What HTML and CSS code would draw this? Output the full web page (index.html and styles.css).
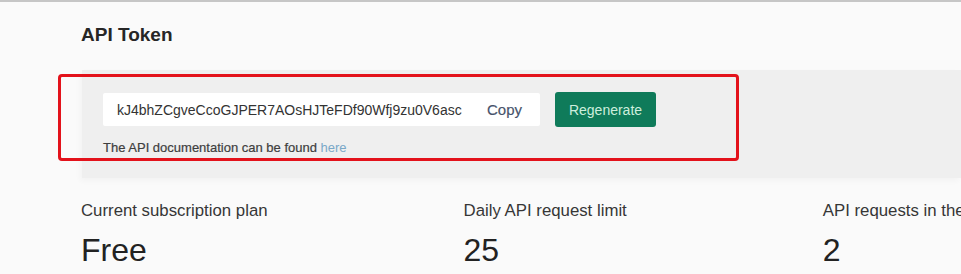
FILE: index.html
```html
<!DOCTYPE html>
<html>
<head>
<meta charset="utf-8">
<link rel="stylesheet" href="styles.css">
</head>
<body>
<div class="page">
  <h2 class="title">API Token</h2>
  <div class="card">
    <div class="token-row">
      <div class="token-field">
        <span class="token">kJ4bhZCgveCcoGJPER7AOsHJTeFDf90Wfj9zu0V6asc</span>
        <span class="copy">Copy</span>
      </div>
      <button class="regen">Regenerate</button>
    </div>
    <p class="note">The API documentation can be found <a class="link">here</a></p>
  </div>
  <div class="stats">
    <div class="stat">
      <div class="label">Current subscription plan</div>
      <div class="value">Free</div>
    </div>
    <div class="stat">
      <div class="label">Daily API request limit</div>
      <div class="value">25</div>
    </div>
    <div class="stat">
      <div class="label">API requests in the last 24 hours</div>
      <div class="value">2</div>
    </div>
  </div>
</div>
<div class="highlight"></div>
</body>
</html>
```
FILE: styles.css
```css
html, body {
  margin: 0;
  padding: 0;
}
body {
  background: #fafafa;
  font-family: "Liberation Sans", Arial, sans-serif;
  border-top: 2px solid #c6c6c6;
  width: 961px;
  height: 272px;
  overflow: hidden;
  position: relative;
}
.page {
  padding-left: 81px;
  padding-top: 22px;
}
.title {
  margin: 0;
  font-size: 19px;
  line-height: 22px;
  font-weight: bold;
  color: #262626;
}
.card {
  margin-top: 24px;
  margin-left: 1px;
  background: #efefef;
  padding: 22px 0 22px 21px;
  box-shadow: -2px 3px 6px rgba(0, 0, 0, 0.03);
}
.token-row {
  display: flex;
  align-items: center;
  gap: 15px;
}
.token-field {
  width: 437px;
  height: 33px;
  background: #ffffff;
  display: flex;
  align-items: center;
  justify-content: space-between;
  padding: 0 18px 0 14px;
  box-sizing: border-box;
  border-radius: 2px;
}
.token {
  font-size: 14px;
  color: #333;
}
.copy {
  font-size: 15px;
  color: #46526a;
  font-weight: normal;
  -webkit-text-stroke: 0.15px #46526a;
}
.regen {
  font-family: inherit;
  height: 35px;
  width: 101px;
  border: none;
  border-radius: 3px;
  background: #0f7b5a;
  color: #cdeedd;
  font-size: 14px;
  padding: 0;
}
.note {
  margin: 13px 0 0 0;
  font-size: 13px;
  line-height: 16px;
  color: #3e3e3e;
  -webkit-text-stroke: 0.2px #3e3e3e;
}
.link {
  color: #7aa8c8;
  -webkit-text-stroke: 0;
}
.stats {
  display: flex;
  gap: 196px;
  margin-top: 23px;
  white-space: nowrap;
}
.label {
  font-size: 16.8px;
  line-height: 20px;
  color: #363636;
}
.value {
  margin-top: 11px;
  font-size: 32px;
  line-height: 36px;
  color: #222;
}
.highlight {
  position: absolute;
  left: 58px;
  top: 72px;
  width: 681px;
  height: 87px;
  box-sizing: border-box;
  border: 3px solid #e3121b;
  border-radius: 4px;
}
```
